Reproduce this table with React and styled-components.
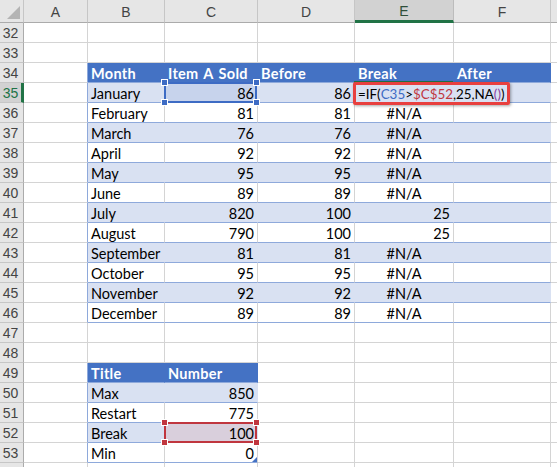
import React from 'react'
import styled, { createGlobalStyle } from 'styled-components'

const GlobalStyle = createGlobalStyle`
    html, body {
        margin: 0;
        padding: 0;
        background: #ffffff;
    }
    body {
        font-family: Lato, "Liberation Sans", sans-serif;
        overflow: hidden;
    }
`

const COLS = ['A', 'B', 'C', 'D', 'E', 'F']

// table one: rows 34-46, B..F ; table two: rows 49-53, B..C
const table1 = [
    ['January', '86', '86', 'FORMULA', ''],
    ['February', '81', '81', '#N/A', ''],
    ['March', '76', '76', '#N/A', ''],
    ['April', '92', '92', '#N/A', ''],
    ['May', '95', '95', '#N/A', ''],
    ['June', '89', '89', '#N/A', ''],
    ['July', '820', '100', '25', ''],
    ['August', '790', '100', '25', ''],
    ['September', '81', '81', '#N/A', ''],
    ['October', '95', '95', '#N/A', ''],
    ['November', '92', '92', '#N/A', ''],
    ['December', '89', '89', '#N/A', ''],
]

const table2 = [
    ['Max', '850'],
    ['Restart', '775'],
    ['Break', '100'],
    ['Min', '0'],
]

const buildRows = () => {
    const rows = []
    for (let n = 32; n <= 54; n++) {
        const cells = COLS.map(() => ({ text: '', kind: 'plain', align: 'left' }))
        if (n === 34) {
            ;['Month', 'Item A Sold', 'Before', 'Break', 'After'].forEach((t, i) => {
                cells[i + 1] = { text: t, kind: 'head', align: 'left' }
            })
        }
        if (n >= 35 && n <= 46) {
            const d = table1[n - 35]
            const kind = (n - 35) % 2 === 0 ? 'band' : 'row'
            cells[1] = { text: d[0], kind, align: 'left' }
            cells[2] = { text: d[1], kind, align: 'right' }
            cells[3] = { text: d[2], kind, align: 'right' }
            cells[4] = { text: d[3], kind, align: d[3] === '#N/A' ? 'center' : 'right' }
            cells[5] = { text: d[4], kind, align: 'left' }
        }
        if (n === 49) {
            cells[1] = { text: 'Title', kind: 'head', align: 'left' }
            cells[2] = { text: 'Number', kind: 'head', align: 'left' }
        }
        if (n >= 50 && n <= 53) {
            const d = table2[n - 50]
            const kind = (n - 50) % 2 === 0 ? 'band' : 'row'
            cells[1] = { text: d[0], kind, align: 'left' }
            cells[2] = { text: d[1], kind, align: 'right' }
        }
        // column A borders the tables on its right side
        if (cells[1].kind !== 'plain') cells[0].edge = true
        rows.push({ n, cells })
    }
    return rows
}

const Formula = () => (
    <FormulaText>
        =IF(<Ref $c="#3d6bc4">C35</Ref>&gt;<Ref $c="#c0363f">$C$52</Ref>,25,NA
        <Ref $c="#8a3fa0">()</Ref>)<Caret />
    </FormulaText>
)

const App = () => {
    const rows = buildRows()
    return (
        <Sheet>
            <GlobalStyle />
            <Corner>
                <CornerTriangle />
            </Corner>
            {COLS.map(c => (
                <ColHead key={c} $active={c === 'E'}>{c}</ColHead>
            ))}
            <ColHead />
            {rows.map(row => (
                <React.Fragment key={row.n}>
                    {/* row 54 is cut by the window, only its top edge shows */}
                    <RowHead $active={row.n === 35}>{row.n < 54 ? row.n : ''}</RowHead>
                    {row.cells.map((cell, i) => {
                        const isBlue = row.n === 35 && i === 2
                        const isRed = row.n === 52 && i === 2
                        const isEdit = row.n === 35 && i === 4
                        return (
                            <Cell
                                key={i}
                                $kind={cell.kind}
                                $align={cell.align}
                                $edge={cell.edge}
                                $tint={isBlue ? '#c7d3ec' : isRed ? '#d9cfdc' : null}
                            >
                                {isEdit ? <Formula /> : cell.text}
                                {isBlue && <RefBox $c="#3d6bc4"><Handles $c="#3d6bc4" /></RefBox>}
                                {isRed && <RefBox $c="#c0363f"><Handles $c="#c0363f" /></RefBox>}
                                {isEdit && <ActiveLine />}
                                {isEdit && <Callout />}
                                {row.n === 53 && i === 2 && <ResizeMark />}
                            </Cell>
                        )
                    })}
                    <Cell $kind="plain" />
                </React.Fragment>
            ))}
        </Sheet>
    )
}

const Handles = ({ $c }) => (
    <>
        <Handle $c={$c} $v="top" $h="left" />
        <Handle $c={$c} $v="top" $h="right" />
        <Handle $c={$c} $v="bottom" $h="left" />
        <Handle $c={$c} $v="bottom" $h="right" />
    </>
)

export default App

const Sheet = styled.div`
    display: grid;
    grid-template-columns: 24px 64px 77px 93px 97px 99px 97px 1fr;
    grid-template-rows: 23px;
    grid-auto-rows: 20px;
    width: 557px;
    height: 467px;
    overflow: hidden;
    font-size: 14.5px;
    color: #000;
`

const Corner = styled.div`
    position: relative;
    background: #e6e6e6;
    border-right: 1px solid #c6c6c6;
    border-bottom: 1px solid #ababab;
    box-sizing: border-box;
`

const CornerTriangle = styled.div`
    position: absolute;
    right: 3px;
    bottom: 3px;
    width: 0;
    height: 0;
    border-left: 13px solid transparent;
    border-bottom: 13px solid #b4b4b4;
`

const ColHead = styled.div`
    display: flex;
    align-items: center;
    justify-content: center;
    box-sizing: border-box;
    padding-top: 2px;
    background: ${p => (p.$active ? '#d2d2d2' : '#e6e6e6')};
    border-right: 1px solid ${p => (p.$active ? '#bcbcbc' : '#c6c6c6')};
    border-bottom: ${p => (p.$active ? '3px solid #217346' : '1px solid #ababab')};
    color: ${p => (p.$active ? '#2f4f3a' : '#444')};
    font-family: "Liberation Sans", Arial, sans-serif;
    font-size: 14px;
`

const RowHead = styled.div`
    display: flex;
    align-items: center;
    justify-content: center;
    box-sizing: border-box;
    background: ${p => (p.$active ? '#d2d2d2' : '#e6e6e6')};
    border-right: ${p => (p.$active ? '3px solid #217346' : '1px solid #ababab')};
    border-bottom: 1px solid #c6c6c6;
    color: ${p => (p.$active ? '#217346' : '#444')};
    font-family: "Liberation Sans", Arial, sans-serif;
    font-size: 14px;
    padding-right: ${p => (p.$active ? '0' : '2px')};
`

const fillFor = k => (k === 'head' ? '#4472c4' : k === 'band' ? '#d9e1f2' : '#ffffff')

const rightFor = p => {
    if (p.$edge) return '#8ea9db'
    if (p.$kind === 'head') return '#4472c4'
    if (p.$kind === 'band') return '#d9e1f2'
    return '#d4d4d4'
}

const Cell = styled.div`
    position: relative;
    box-sizing: border-box;
    display: flex;
    align-items: center;
    justify-content: ${p => (p.$align === 'right' ? 'flex-end' : p.$align === 'center' ? 'center' : 'flex-start')};
    padding: 1px 3px 0 3px;
    white-space: nowrap;
    background: ${p => p.$tint || fillFor(p.$kind)};
    color: ${p => (p.$kind === 'head' ? '#ffffff' : '#000')};
    font-weight: ${p => (p.$kind === 'head' ? 700 : 400)};
    letter-spacing: ${p => (p.$kind === 'head' ? '0.3px' : '0')};
    word-spacing: ${p => (p.$kind === 'head' ? '1.5px' : '0')};
    border-right: 1px solid ${p => rightFor(p)};
    border-bottom: 1px solid ${p => (p.$kind === 'plain' ? '#d4d4d4' : '#8ea9db')};
`

const FormulaText = styled.span`
    position: absolute;
    left: 3px;
    top: 1px;
    height: 19px;
    display: flex;
    align-items: center;
    font-size: 13.4px;
    z-index: 3;
`

const Ref = styled.span`
    color: ${p => p.$c};
`

const Caret = styled.span`
    display: inline-block;
    width: 1px;
    height: 16px;
    margin-left: 2px;
    background: #000;
`

const RefBox = styled.div`
    position: absolute;
    left: -1px;
    top: -1px;
    right: 0;
    bottom: -1px;
    border: 2px solid ${p => p.$c};
    z-index: 2;
`

const Handle = styled.div`
    position: absolute;
    width: 5px;
    height: 5px;
    background: ${p => p.$c};
    border: 1px solid #ffffff;
    ${p => (p.$v === 'top' ? 'top: -5px;' : 'bottom: -5px;')}
    ${p => (p.$h === 'left' ? 'left: -5px;' : 'right: -5px;')}
`

const ActiveLine = styled.div`
    position: absolute;
    left: -1px;
    top: -2px;
    right: 0;
    height: 2px;
    background: #217346;
    z-index: 1;
`

const Callout = styled.div`
    position: absolute;
    left: -2px;
    top: -1px;
    width: 157px;
    height: 23px;
    box-sizing: border-box;
    border: 3px solid #e8403f;
    border-radius: 2px;
    box-shadow: 1px 1px 3px rgba(0, 0, 0, 0.35);
    z-index: 4;
`

const ResizeMark = styled.div`
    position: absolute;
    right: 0;
    bottom: 0;
    width: 0;
    height: 0;
    border-left: 5px solid transparent;
    border-bottom: 5px solid #4472c4;
`
